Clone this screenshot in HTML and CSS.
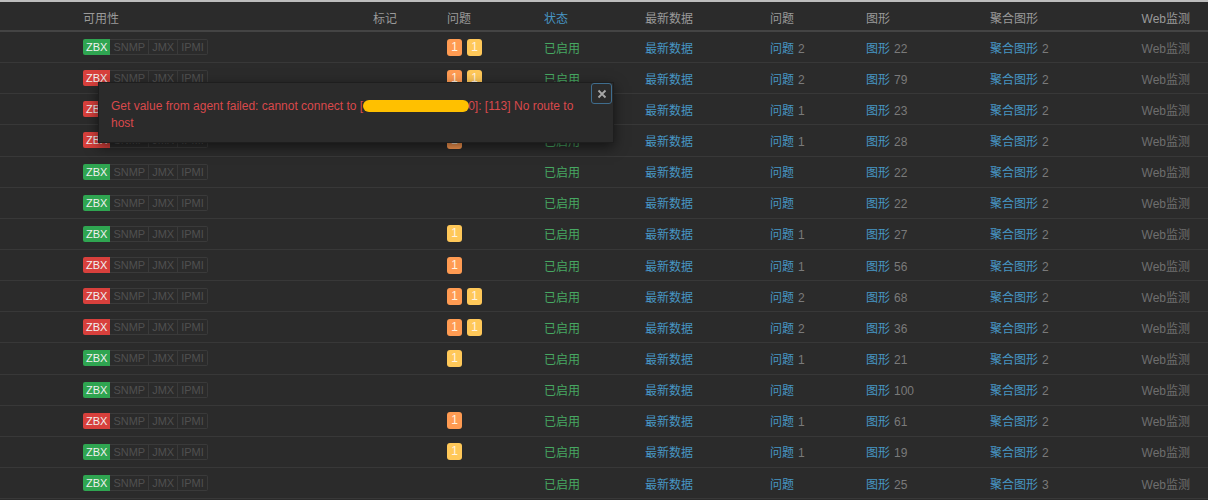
FILE: index.html
```html
<!DOCTYPE html>
<html lang="zh">
<head>
<meta charset="utf-8">
<title>主机</title>
<link rel="stylesheet" href="styles.css">
</head>
<body>
<div class="page">
  <div class="table">
    <div class="row head">
      <div></div>
      <div>可用性</div>
      <div>标记</div>
      <div>问题</div>
      <div class="sorted">状态</div>
      <div>最新数据</div>
      <div>问题</div>
      <div>图形</div>
      <div>聚合图形</div>
      <div class="web">Web监测</div>
    </div>

    <div class="row"><div></div><div class="avail"><span class="if zbx ok">ZBX</span><span class="if">SNMP</span><span class="if">JMX</span><span class="if">IPMI</span></div><div></div><div class="probs"><span class="sev avg">1</span><span class="sev warn">1</span></div><div class="on">已启用</div><div><a>最新数据</a></div><div><a>问题</a><span class="cnt">2</span></div><div><a>图形</a><span class="cnt">22</span></div><div><a>聚合图形</a><span class="cnt">2</span></div><div class="web">Web监测</div></div>

    <div class="row"><div></div><div class="avail"><span class="if zbx bad">ZBX</span><span class="if">SNMP</span><span class="if">JMX</span><span class="if">IPMI</span></div><div></div><div class="probs"><span class="sev avg">1</span><span class="sev warn">1</span></div><div class="on">已启用</div><div><a>最新数据</a></div><div><a>问题</a><span class="cnt">2</span></div><div><a>图形</a><span class="cnt">79</span></div><div><a>聚合图形</a><span class="cnt">2</span></div><div class="web">Web监测</div></div>

    <div class="row"><div></div><div class="avail"><span class="if zbx bad">ZBX</span><span class="if">SNMP</span><span class="if">JMX</span><span class="if">IPMI</span></div><div></div><div class="probs"><span class="sev avg">1</span></div><div class="on">已启用</div><div><a>最新数据</a></div><div><a>问题</a><span class="cnt">1</span></div><div><a>图形</a><span class="cnt">23</span></div><div><a>聚合图形</a><span class="cnt">2</span></div><div class="web">Web监测</div></div>

    <div class="row"><div></div><div class="avail"><span class="if zbx bad">ZBX</span><span class="if">SNMP</span><span class="if">JMX</span><span class="if">IPMI</span></div><div></div><div class="probs"><span class="sev avg">1</span></div><div class="on">已启用</div><div><a>最新数据</a></div><div><a>问题</a><span class="cnt">1</span></div><div><a>图形</a><span class="cnt">28</span></div><div><a>聚合图形</a><span class="cnt">2</span></div><div class="web">Web监测</div></div>

    <div class="row"><div></div><div class="avail"><span class="if zbx ok">ZBX</span><span class="if">SNMP</span><span class="if">JMX</span><span class="if">IPMI</span></div><div></div><div class="probs"></div><div class="on">已启用</div><div><a>最新数据</a></div><div><a>问题</a></div><div><a>图形</a><span class="cnt">22</span></div><div><a>聚合图形</a><span class="cnt">2</span></div><div class="web">Web监测</div></div>

    <div class="row"><div></div><div class="avail"><span class="if zbx ok">ZBX</span><span class="if">SNMP</span><span class="if">JMX</span><span class="if">IPMI</span></div><div></div><div class="probs"></div><div class="on">已启用</div><div><a>最新数据</a></div><div><a>问题</a></div><div><a>图形</a><span class="cnt">22</span></div><div><a>聚合图形</a><span class="cnt">2</span></div><div class="web">Web监测</div></div>

    <div class="row"><div></div><div class="avail"><span class="if zbx ok">ZBX</span><span class="if">SNMP</span><span class="if">JMX</span><span class="if">IPMI</span></div><div></div><div class="probs"><span class="sev warn">1</span></div><div class="on">已启用</div><div><a>最新数据</a></div><div><a>问题</a><span class="cnt">1</span></div><div><a>图形</a><span class="cnt">27</span></div><div><a>聚合图形</a><span class="cnt">2</span></div><div class="web">Web监测</div></div>

    <div class="row"><div></div><div class="avail"><span class="if zbx bad">ZBX</span><span class="if">SNMP</span><span class="if">JMX</span><span class="if">IPMI</span></div><div></div><div class="probs"><span class="sev avg">1</span></div><div class="on">已启用</div><div><a>最新数据</a></div><div><a>问题</a><span class="cnt">1</span></div><div><a>图形</a><span class="cnt">56</span></div><div><a>聚合图形</a><span class="cnt">2</span></div><div class="web">Web监测</div></div>

    <div class="row"><div></div><div class="avail"><span class="if zbx bad">ZBX</span><span class="if">SNMP</span><span class="if">JMX</span><span class="if">IPMI</span></div><div></div><div class="probs"><span class="sev avg">1</span><span class="sev warn">1</span></div><div class="on">已启用</div><div><a>最新数据</a></div><div><a>问题</a><span class="cnt">2</span></div><div><a>图形</a><span class="cnt">68</span></div><div><a>聚合图形</a><span class="cnt">2</span></div><div class="web">Web监测</div></div>

    <div class="row"><div></div><div class="avail"><span class="if zbx bad">ZBX</span><span class="if">SNMP</span><span class="if">JMX</span><span class="if">IPMI</span></div><div></div><div class="probs"><span class="sev avg">1</span><span class="sev warn">1</span></div><div class="on">已启用</div><div><a>最新数据</a></div><div><a>问题</a><span class="cnt">2</span></div><div><a>图形</a><span class="cnt">36</span></div><div><a>聚合图形</a><span class="cnt">2</span></div><div class="web">Web监测</div></div>

    <div class="row"><div></div><div class="avail"><span class="if zbx ok">ZBX</span><span class="if">SNMP</span><span class="if">JMX</span><span class="if">IPMI</span></div><div></div><div class="probs"><span class="sev warn">1</span></div><div class="on">已启用</div><div><a>最新数据</a></div><div><a>问题</a><span class="cnt">1</span></div><div><a>图形</a><span class="cnt">21</span></div><div><a>聚合图形</a><span class="cnt">2</span></div><div class="web">Web监测</div></div>

    <div class="row"><div></div><div class="avail"><span class="if zbx ok">ZBX</span><span class="if">SNMP</span><span class="if">JMX</span><span class="if">IPMI</span></div><div></div><div class="probs"></div><div class="on">已启用</div><div><a>最新数据</a></div><div><a>问题</a></div><div><a>图形</a><span class="cnt">100</span></div><div><a>聚合图形</a><span class="cnt">2</span></div><div class="web">Web监测</div></div>

    <div class="row"><div></div><div class="avail"><span class="if zbx bad">ZBX</span><span class="if">SNMP</span><span class="if">JMX</span><span class="if">IPMI</span></div><div></div><div class="probs"><span class="sev avg">1</span></div><div class="on">已启用</div><div><a>最新数据</a></div><div><a>问题</a><span class="cnt">1</span></div><div><a>图形</a><span class="cnt">61</span></div><div><a>聚合图形</a><span class="cnt">2</span></div><div class="web">Web监测</div></div>

    <div class="row"><div></div><div class="avail"><span class="if zbx ok">ZBX</span><span class="if">SNMP</span><span class="if">JMX</span><span class="if">IPMI</span></div><div></div><div class="probs"><span class="sev warn">1</span></div><div class="on">已启用</div><div><a>最新数据</a></div><div><a>问题</a><span class="cnt">1</span></div><div><a>图形</a><span class="cnt">19</span></div><div><a>聚合图形</a><span class="cnt">2</span></div><div class="web">Web监测</div></div>

    <div class="row"><div></div><div class="avail"><span class="if zbx ok">ZBX</span><span class="if">SNMP</span><span class="if">JMX</span><span class="if">IPMI</span></div><div></div><div class="probs"></div><div class="on">已启用</div><div><a>最新数据</a></div><div><a>问题</a></div><div><a>图形</a><span class="cnt">25</span></div><div><a>聚合图形</a><span class="cnt">3</span></div><div class="web">Web监测</div></div>
  </div>

  <div class="hint">
    <button class="hint-close" aria-label="关闭">
      <svg width="10" height="10" viewBox="0 0 10 10"><path d="M1.5 1.5 L8.5 8.5 M8.5 1.5 L1.5 8.5" stroke="#a8a8a8" stroke-width="1.8" fill="none"/></svg>
    </button>
    <p class="hint-text">Get value from agent failed: cannot connect to [<span class="redact"></span>0]: [113] No route to host</p>
  </div>
</div>
</body>
</html>
```

FILE: styles.css
```css
html, body {
  margin: 0;
  padding: 0;
  background: #2b2b2b;
}

.page {
  position: relative;
  width: 1208px;
  height: 500px;
  overflow: hidden;
  background: #2b2b2b;
  border-top: 2px solid #bdbdbd;
  box-sizing: border-box;
  font-family: "Liberation Sans", Arial, "Noto Sans CJK SC", sans-serif;
  font-size: 12px;
  color: #9a9a9a;
}

.table {
  display: flex;
  flex-direction: column;
}

.row {
  display: grid;
  grid-template-columns: 83px 290px 74px 97px 101px 125px 96px 124px 1fr 120px;
  align-items: center;
  height: 30.15px;
  border-bottom: 1px solid #383838;
  white-space: nowrap;
}

.row.head {
  height: 25px;
  padding-top: 3px;
  border-bottom: 2px solid #444444;
  color: #9a9a9a;
}

.row.head .sorted {
  color: #4796c4;
}

.web {
  text-align: right;
  padding-right: 18px;
  color: #6e6e6e;
}

.row.head .web {
  color: #9a9a9a;
}

a {
  color: #4796c4;
  text-decoration: none;
}

.cnt {
  margin-left: 4px;
  color: #7a7a7a;
}

.on {
  color: #47a862;
}

.avail {
  display: flex;
}

.if {
  display: inline-block;
  height: 14px;
  line-height: 14px;
  padding: 0 3px;
  border: 1px solid #3a3a3a;
  border-left-width: 0;
  color: #505050;
  font-size: 11px;
}

.if.zbx {
  border: 1px solid transparent;
  border-radius: 2px 0 0 2px;
  color: #f0f0f0;
  padding: 0 2px;
}

.if.ok {
  background: #2fa551;
}

.if.bad {
  background: #d8403c;
}

.if:last-child {
  border-radius: 0 2px 2px 0;
}

.probs {
  display: flex;
  gap: 5px;
}

.sev {
  display: inline-block;
  width: 15px;
  height: 17px;
  line-height: 17px;
  text-align: center;
  border-radius: 3px;
  color: #fff3e0;
  font-size: 12px;
}

.sev.avg {
  background: #ff9b52;
}

.sev.warn {
  background: #ffc859;
}

.hint {
  position: absolute;
  left: 98px;
  top: 80px;
  width: 516px;
  height: 61px;
  box-sizing: border-box;
  background: #2b2b2b;
  border: 1px solid #1e1e1e;
  box-shadow: 0 4px 12px rgba(0, 0, 0, 0.55);
  padding: 15px 30px 0 12px;
}

.hint-text {
  margin: 0;
  color: #d9494b;
  font-size: 12px;
  line-height: 17px;
}

.redact {
  display: inline-block;
  width: 106px;
  height: 12px;
  margin: 0 -1px -1px 0;
  background: #ffc000;
  border-radius: 6px;
  vertical-align: -1px;
}

.hint-close {
  position: absolute;
  right: 1px;
  top: 0;
  width: 21px;
  height: 21px;
  padding: 0;
  display: flex;
  align-items: center;
  justify-content: center;
  background: #2b2b2b;
  border: 1px solid #3f6d8e;
  border-radius: 3px;
}
```
